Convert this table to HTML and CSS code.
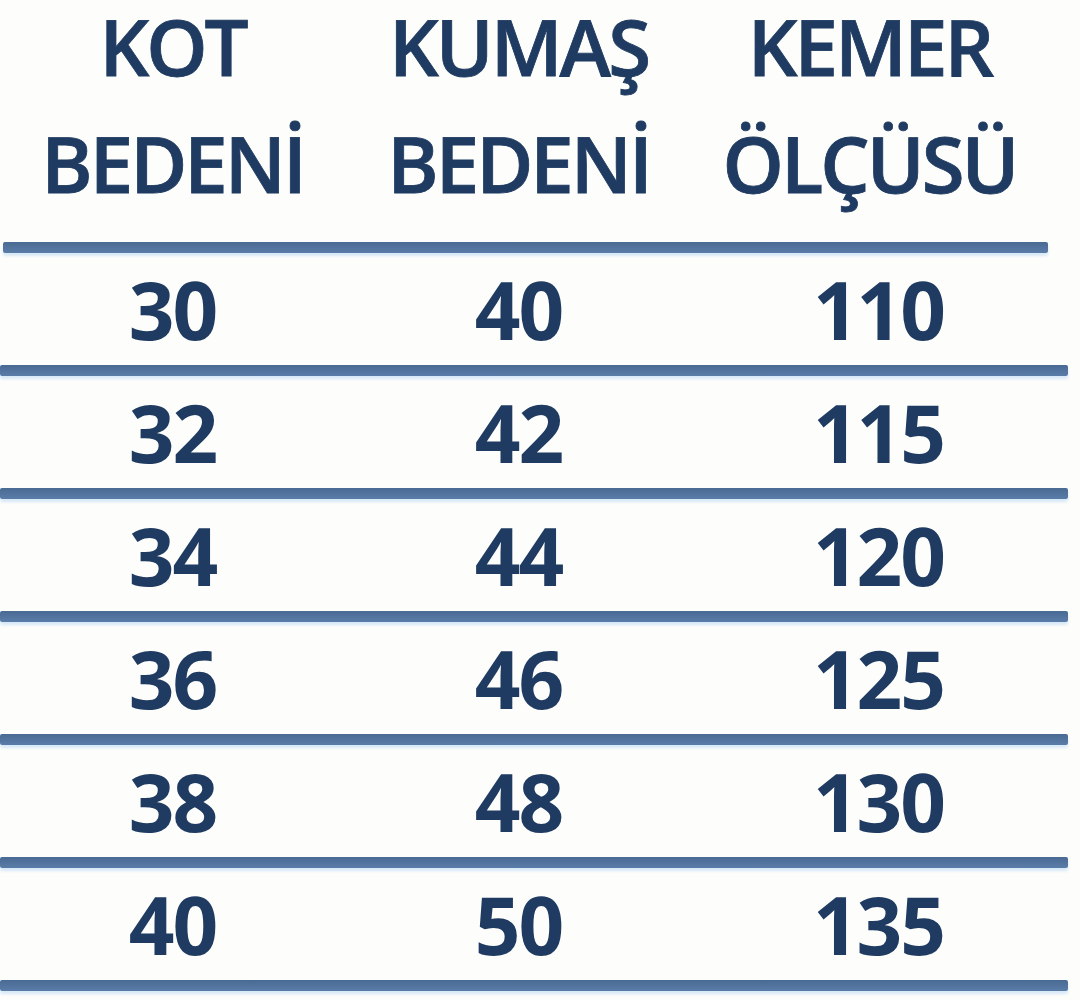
FILE: index.html
```html
<!DOCTYPE html>
<html lang="tr">
<head>
<meta charset="utf-8">
<title>Beden Tablosu</title>
<link rel="stylesheet" href="styles.css">
</head>
<body>
<div class="chart">
  <div class="head">
    <div class="cell c1"><span class="l">KOT</span><span class="l">BEDENİ</span></div>
    <div class="cell c2"><span class="l">KUMAŞ</span><span class="l">BEDENİ</span></div>
    <div class="cell c3"><span class="l">KEMER</span><span class="l">ÖLÇÜSÜ</span></div>
  </div>
  <div class="rule rule-head"></div>
  <div class="row"><div class="cell c1">30</div><div class="cell c2">40</div><div class="cell c3">110</div></div>
  <div class="rule"></div>
  <div class="row"><div class="cell c1">32</div><div class="cell c2">42</div><div class="cell c3">115</div></div>
  <div class="rule"></div>
  <div class="row"><div class="cell c1">34</div><div class="cell c2">44</div><div class="cell c3">120</div></div>
  <div class="rule"></div>
  <div class="row"><div class="cell c1">36</div><div class="cell c2">46</div><div class="cell c3">125</div></div>
  <div class="rule"></div>
  <div class="row"><div class="cell c1">38</div><div class="cell c2">48</div><div class="cell c3">130</div></div>
  <div class="rule"></div>
  <div class="row"><div class="cell c1">40</div><div class="cell c2">50</div><div class="cell c3">135</div></div>
  <div class="rule"></div>
</div>
</body>
</html>
```
FILE: styles.css
```css
html, body {
  margin: 0;
  padding: 0;
  background: #fdfdfb;
}
.chart {
  width: 1080px;
  height: 1000px;
  overflow: hidden;
  font-family: "Open Sans", "Liberation Sans", sans-serif;
  color: #1f3b61;
}
.head, .row {
  display: grid;
  grid-template-columns: 345px 347px 363px;
}
.head {
  height: 242px;
  align-items: start;
  font-size: 78px;
  font-weight: 600;
  letter-spacing: -3px;
  -webkit-text-stroke: 0.8px #1f3b61;
}
.head .l {
  display: block;
  line-height: 92px;
}
.head .l + .l {
  margin-top: 25px;
}
.row {
  height: 112px;
  align-items: center;
  font-size: 80px;
  font-weight: 700;
  line-height: 1;
  letter-spacing: -2px;
}
.cell {
  text-align: center;
}
.head .c3 { padding-right: 8px; }
.row .c3 { padding-left: 10px; }
.rule {
  width: 1068px;
  height: 11px;
  background: linear-gradient(#486a93, #5a7ca8);
  border-radius: 2px;
  box-shadow: 0 3px 3px rgba(190, 220, 245, 0.6);
}
.rule-head {
  margin-left: 3px;
  width: 1045px;
}
```
